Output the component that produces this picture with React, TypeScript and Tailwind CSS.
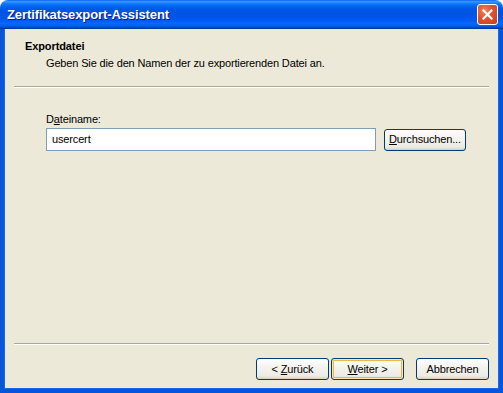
import React from "react";

const font = { fontFamily: '"Liberation Sans", Arial, sans-serif' };

function XpButton({
  children,
  width,
  def,
}: {
  children: React.ReactNode;
  width: string;
  def?: boolean;
}) {
  return (
    <div
      className={
        "flex h-[22px] items-center justify-center rounded-[3px] border border-[#003c74] bg-[linear-gradient(to_bottom,#ffffff_0%,#f4f3ee_40%,#ecebe4_85%,#d6d0c5_100%)] text-[11px] leading-[13px] tracking-[-0.15px] text-black " +
        width +
        (def
          ? " shadow-[inset_0_0_0_1px_#fce7b0,inset_0_0_0_2px_#f5b63f]"
          : " shadow-[inset_0_-1px_0_#d8d2c6]")
      }
    >
      {children}
    </div>
  );
}

export default function App() {
  return (
    <div className="h-[393px] w-[503px] bg-white" style={font}>
      <div className="flex h-[393px] w-[503px] flex-col overflow-hidden rounded-t-[8px]">
        {/* Title bar */}
        <div className="flex h-[29px] shrink-0 items-center justify-between bg-[linear-gradient(to_bottom,#0058ee_0%,#3a93ff_4%,#288eff_8%,#127dff_12%,#036ffc_17%,#0262ee_24%,#0057e5_32%,#0054e3_45%,#0055eb_62%,#005bf5_72%,#026afe_80%,#0062ef_88%,#0052d6_93%,#0040ab_97%,#003092_100%)] pl-[7px] pr-[5px]">
          <span className="pt-[1px] text-[13px] font-bold leading-[16px] tracking-[-0.1px] text-white [text-shadow:1px_1px_0_#0a1883]">
            Zertifikatsexport-Assistent
          </span>
          <div className="flex h-[21px] w-[21px] items-center justify-center rounded-[3px] border border-white bg-[radial-gradient(circle_at_35%_30%,#f0805f_0%,#e0512c_45%,#c8401c_100%)]">
            <svg width="11" height="11" viewBox="0 0 11 11">
              <path
                d="M1.5 1.5 L9.5 9.5 M9.5 1.5 L1.5 9.5"
                stroke="white"
                strokeWidth="2.2"
                strokeLinecap="square"
              />
            </svg>
          </div>
        </div>

        {/* Frame + body */}
        <div className="flex flex-1 flex-col border-x-[4px] border-b-[4px] border-[#0855dd]">
          <div className="flex flex-1 flex-col bg-[#ece9d8] shadow-[inset_1px_0_0_#166aee,inset_-1px_0_0_#166aee,inset_0_-1px_0_#166aee]">
            {/* Header */}
            <div className="h-[57px] shrink-0 pl-[21px] pt-[11px]">
              <div className="text-[11px] font-bold leading-[13px] tracking-[-0.1px] text-black">
                Exportdatei
              </div>
              <div className="mt-[4px] pl-[21px] text-[11px] leading-[13px] tracking-[-0.15px] text-black">
                Geben Sie die den Namen der zu exportierenden Datei an.
              </div>
            </div>
            <div className="mx-[10px] h-[2px] shrink-0 border-t border-b border-t-[#aca899] border-b-white" />

            {/* Content */}
            <div className="flex-1 pl-[42px] pt-[25px]">
              <div className="text-[11px] leading-[13px] tracking-[-0.15px] text-black">
                D<span className="underline">a</span>teiname:
              </div>
              <div className="mt-[2px] flex items-center">
                <div className="flex h-[23px] w-[330px] items-center border border-[#7f9db9] bg-white pl-[5px] text-[11px] leading-[13px] tracking-[-0.15px] text-black">
                  usercert
                </div>
                <div className="ml-[8px]">
                  <XpButton width="w-[82px]">
                    <span>
                      <span className="underline">D</span>urchsuchen...
                    </span>
                  </XpButton>
                </div>
              </div>
            </div>

            <div className="mx-[10px] h-[2px] shrink-0 border-t border-b border-t-[#aca899] border-b-white" />

            {/* Buttons */}
            <div className="flex h-[44px] shrink-0 items-start justify-end pr-[10px] pt-[13px]">
              <XpButton width="w-[73px]">
                <span>
                  &lt; <span className="underline">Z</span>urück
                </span>
              </XpButton>
              <div className="ml-[2px]">
                <XpButton width="w-[73px]" def>
                  <span>
                    <span className="underline">W</span>eiter &gt;
                  </span>
                </XpButton>
              </div>
              <div className="ml-[12px]">
                <XpButton width="w-[73px]">Abbrechen</XpButton>
              </div>
            </div>
          </div>
        </div>
      </div>
    </div>
  );
}
